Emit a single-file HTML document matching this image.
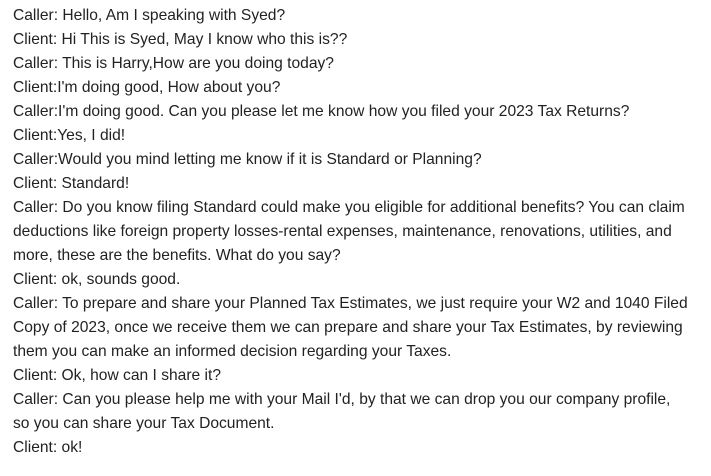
<!DOCTYPE html>
<html><head><meta charset="utf-8"><style>
html,body{margin:0;padding:0;background:#fff;width:711px;height:476px;overflow:hidden}
.t{position:absolute;left:13px;top:4px;font-family:"Liberation Sans",sans-serif;font-size:15.6px;line-height:24px;color:#222;white-space:nowrap}
</style></head><body><div class="t">
Caller: Hello, Am I speaking with Syed?<br>
Client: Hi This is Syed, May I know who this is??<br>
Caller: This is Harry,How are you doing today?<br>
Client:I'm doing good, How about you?<br>
Caller:I'm doing good. Can you please let me know how you filed your 2023 Tax Returns?<br>
Client:Yes, I did!<br>
Caller:Would you mind letting me know if it is Standard or Planning?<br>
Client: Standard!<br>
Caller: Do you know filing Standard could make you eligible for additional benefits? You can claim<br>
deductions like foreign property losses-rental expenses, maintenance, renovations, utilities, and<br>
more, these are the benefits. What do you say?<br>
Client: ok, sounds good.<br>
Caller: To prepare and share your Planned Tax Estimates, we just require your W2 and 1040 Filed<br>
Copy of 2023, once we receive them we can prepare and share your Tax Estimates, by reviewing<br>
them you can make an informed decision regarding your Taxes.<br>
Client: Ok, how can I share it?<br>
Caller: Can you please help me with your Mail I'd, by that we can drop you our company profile,<br>
so you can share your Tax Document.<br>
Client: ok!
</div></body></html>
